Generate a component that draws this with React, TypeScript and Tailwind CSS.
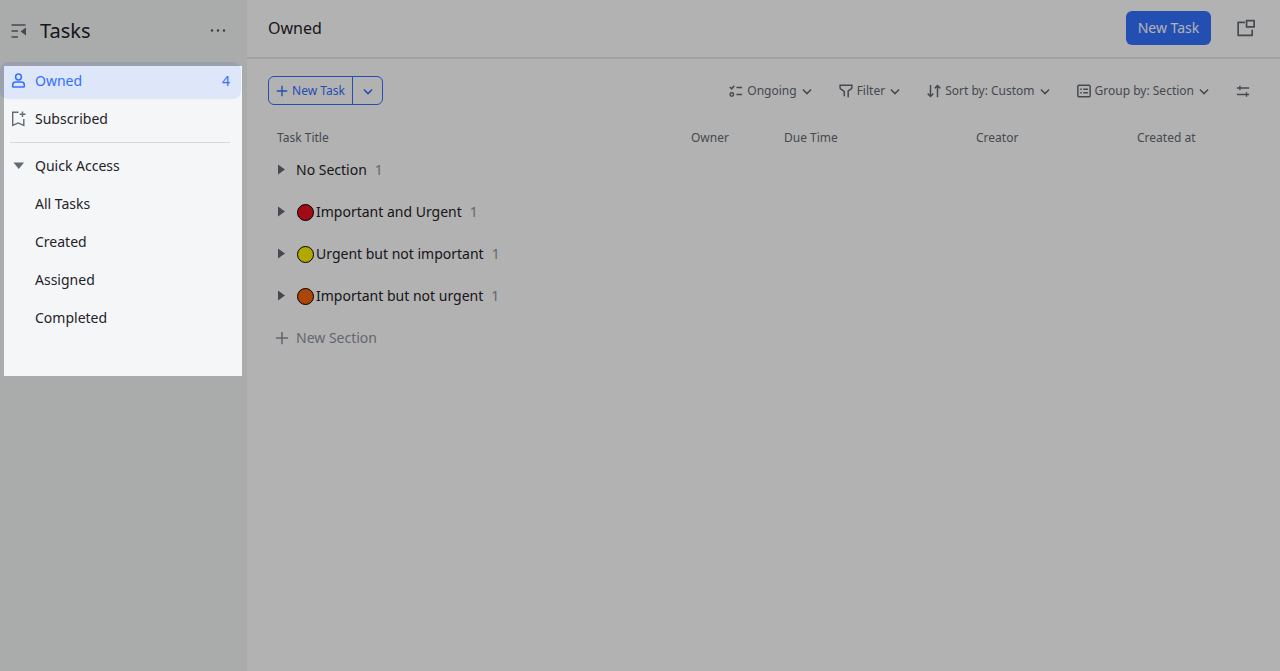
import { useState } from "react";
import type { ReactNode } from "react";

const quickAccess = ["All Tasks", "Created", "Assigned", "Completed"];

const sections = [
    { title: "No Section", count: 1, dot: "" },
    { title: "Important and Urgent", count: 1, dot: "bg-[#e8101f]" },
    { title: "Urgent but not important", count: 1, dot: "bg-[#fff200]" },
    { title: "Important but not urgent", count: 1, dot: "bg-[#f7630c]" },
];

type IconProps = { children: ReactNode; className?: string; size?: number };

const Icon = ({ children, className = "", size = 16 }: IconProps) => (
    <svg
        width={size}
        height={size}
        viewBox="0 0 16 16"
        fill="none"
        stroke="currentColor"
        strokeWidth="1.5"
        className={`shrink-0 ${className}`}
        aria-hidden="true"
    >
        {children}
    </svg>
);

const Chevron = () => (
    <Icon size={12}>
        <path d="M2.5 6 8 11.500 13.500 6" strokeWidth="1.9" />
    </Icon>
);

const Plus = ({ size = 12 }: { size?: number }) => (
    <Icon size={size}>
        <path d="M8 1v14M1 8h14" strokeWidth="1.8" />
    </Icon>
);

const ToolbarButton = ({ icon, label }: { icon: ReactNode; label: string }) => (
    <button type="button" className="flex items-center gap-1 text-[#646a73]">
        {icon}
        <span>{label}</span>
        <Chevron />
    </button>
);

const Sidebar = () => (
    <aside className="relative w-[247px] shrink-0 bg-[#f3f7f5]">
        <div className="flex h-[62px] items-center pl-[11px] pr-[21px]">
            <button type="button" aria-label="Collapse sidebar" className="text-[#646a73]">
                <Icon>
                    <path d="M.5 2h14M.5 8H7M.5 14H7" />
                    <path d="M15 4.500v8L9.500 8.500z" fill="currentColor" stroke="none" />
                </Icon>
            </button>
            <h1 className="ml-[13px] flex-1 text-xl">Tasks</h1>
            <button type="button" aria-label="More" className="text-[#51565d]">
                <Icon>
                    <g fill="currentColor" stroke="none">
                        <circle cx="2" cy="7.500" r="1.200" />
                        <circle cx="8" cy="7.500" r="1.200" />
                        <circle cx="14" cy="7.500" r="1.200" />
                    </g>
                </Icon>
            </button>
        </div>

        <nav className="mr-[5px] bg-[#f5f6f8] pb-[39px] text-sm">
            <a
                href="#owned"
                className="mb-px mr-px flex h-[37px] items-center gap-2 rounded-lg bg-[#dee6fa] pl-[11px] pr-[11px] text-[#3370ff]"
            >
                <Icon>
                    <circle cx="7.500" cy="4" r="2.900" />
                    <path
                        d="M4.500 9h6c1.700 0 2.800 1.400 2.800 3v1.500c0 .3-.2.500-.5.500H2.200a.5.500 0 0 1-.5-.5V12c0-1.600 1.100-3 2.800-3z"
                    />
                </Icon>
                <span className="flex-1">Owned</span>
                <span>4</span>
            </a>
            <a href="#subscribed" className="flex h-[38px] items-center gap-2 pl-[11px]">
                <Icon className="text-[#646a73]">
                    <path d="M7.500 1.200H1.700v13.300l5.500-2.600 5.600 2.600V8M11.500.5v5.500M8.700 3.200h5.800" strokeWidth="1.4" />
                </Icon>
                <span>Subscribed</span>
            </a>
            <hr className="ml-[10px] mr-[12px] mt-1 mb-1 border-[#d5d7da]" />
            <button type="button" className="flex h-[38px] w-full items-center gap-2 pl-[11px] text-left">
                <Icon className="text-[#646a73]">
                    <path d="M2.500 4.500h10.500L7.750 11z" fill="currentColor" stroke="none" />
                </Icon>
                <span>Quick Access</span>
            </button>
            {quickAccess.map((item) => (
                <a key={item} href="#quick" className="flex h-[38px] items-center pl-[35px]">
                    {item}
                </a>
            ))}
        </nav>

        {/* Spotlight: everything outside this box is dimmed by its shadow */}
        <div className="pointer-events-none absolute left-1 top-[66px] z-10 h-[310px] w-[238px] shadow-[0_0_0_4000px_rgba(0,0,0,0.3)]" />
    </aside>
);

const SectionRow = ({ title, count, dot }: (typeof sections)[number]) => {
    const [open, setOpen] = useState(false);

    return (
        <tr>
            <td colSpan={5} className="h-[42px] p-0 pl-[2px]">
                <button
                    type="button"
                    aria-expanded={open}
                    onClick={() => setOpen(!open)}
                    className="flex items-center text-sm"
                >
                    <Icon className={open ? "rotate-90 text-[#646a73]" : "text-[#646a73]"}>
                        <path d="M5 2.500v10L12 7.500z" fill="currentColor" stroke="none" />
                    </Icon>
                    {dot ? (
                        <span className={`ml-2 mr-0.5 size-[17px] rounded-full border border-black ${dot}`} />
                    ) : (
                        <span className="w-[7px]" />
                    )}
                    <span>{title}</span>
                    <span className="ml-2 text-[#8f959e]">{count}</span>
                </button>
            </td>
        </tr>
    );
};

const App = () => {
    return (
        <div className="flex min-h-screen overflow-hidden bg-white font-['Noto_Sans','Open_Sans',sans-serif] text-[#1f2329]">
            <Sidebar />

            <main className="min-w-0 flex-1">
                <header className="flex h-[59px] items-center border-b-2 border-[#e8e9eb] pb-px pl-[21px] pr-[25px]">
                    <h2 className="flex-1 text-base">Owned</h2>
                    <button
                        type="button"
                        className="h-[34px] w-[85px] rounded-md bg-[#3370ff] text-sm text-white"
                    >
                        New Task
                    </button>
                    <button type="button" aria-label="Open in new window" className="ml-[26px] text-[#646a73]">
                        <Icon size={18}>
                            <path
                                d="M7 3H1v11.500h12.500V9.500M8.500 1.500H15.200V7H8.500z"
                                strokeWidth="1.5"
                                strokeLinejoin="round"
                            />
                        </Icon>
                    </button>
                </header>

                <div className="flex items-center pl-[21px] pr-[30px] pt-[17px] text-xs">
                    <div className="flex h-[29px] rounded-md border border-[#3370ff] text-[#3370ff]">
                        <button type="button" className="flex w-[84px] items-center justify-center gap-1 border-r border-[#3370ff]">
                            <Plus />
                            New Task
                        </button>
                        <button type="button" aria-label="More ways to add" className="flex w-[29px] items-center justify-center">
                            <Chevron />
                        </button>
                    </div>

                    <div className="ml-auto flex items-center gap-[26px]">
                        <ToolbarButton
                            label="Ongoing"
                            icon={
                                <Icon size={14}>
                                    <path d="M1 3.500 3 5.500 6 2M8.500 4H15M8.500 12H15" strokeWidth="1.7" />
                                    <circle cx="3.200" cy="12" r="2" strokeWidth="1.600" />
                                </Icon>
                            }
                        />
                        <ToolbarButton
                            label="Filter"
                            icon={
                                <Icon size={14}>
                                    <path
                                        d="M6 14V8.500L1.800 5.500Q1.200 5 1.200 4.200V1.500h13.500v2.700q0 .8-.7 1.300L10.500 8v7"
                                        strokeWidth="1.700"
                                    />
                                </Icon>
                            }
                        />
                        <ToolbarButton
                            label="Sort by: Custom"
                            icon={
                                <Icon size={14}>
                                    <path
                                        d="M4 1v13M.8 11 4 14.200 7.200 11M12 15V2M8.800 5 12 1.800 15.200 5"
                                        strokeWidth="1.700"
                                    />
                                </Icon>
                            }
                        />
                        <ToolbarButton
                            label="Group by: Section"
                            icon={
                                <Icon size={14}>
                                    <rect x="1" y="1.500" width="14" height="13" rx="1" strokeWidth="1.700" />
                                    <path d="M3.700 6h1.800M3.700 10h1.800M7.200 6h5.300M7.200 10h5.300" strokeWidth="1.600" />
                                </Icon>
                            }
                        />
                        <button type="button" aria-label="Field settings" className="text-[#646a73]">
                            <Icon size={14}>
                                <path d="M1 4.500h14M1 12h14M4.500 2v5M12 9.500v5" strokeWidth="1.600" />
                            </Icon>
                        </button>
                    </div>
                </div>

                <div className="pl-6 pt-[22px]">
                    <table className="w-full table-fixed border-collapse">
                        <thead>
                            <tr className="text-left text-xs text-[#646a73]">
                                <th className="h-[22px] p-0 pl-[6px] font-normal">Task Title</th>
                                <th className="w-[93px] p-0 font-normal">Owner</th>
                                <th className="w-[192px] p-0 font-normal">Due Time</th>
                                <th className="w-[161px] p-0 font-normal">Creator</th>
                                <th className="w-[143px] p-0 font-normal">Created at</th>
                            </tr>
                        </thead>
                        <tbody>
                            {sections.map((section) => (
                                <SectionRow key={section.title} {...section} />
                            ))}
                        </tbody>
                    </table>
                    <button type="button" className="flex h-[42px] items-center gap-[7px] pl-1 text-sm text-[#8f959e]">
                        <Plus size={14} />
                        New Section
                    </button>
                </div>
            </main>
        </div>
    );
};

export default App;
